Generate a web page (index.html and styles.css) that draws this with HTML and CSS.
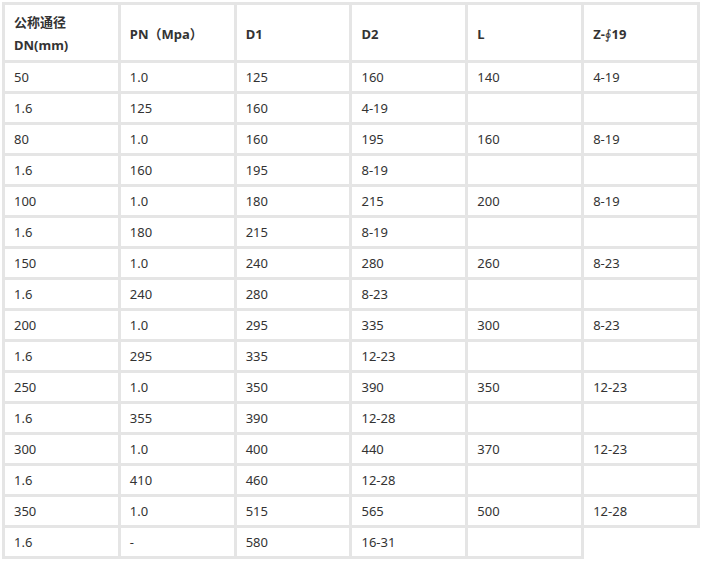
FILE: index.html
```html
<!DOCTYPE html>
<html lang="zh-CN">
<head>
<meta charset="utf-8">
<title>规格表</title>
<link rel="stylesheet" href="styles.css">
</head>
<body>
<div class="wrap">
<table class="spec">
<thead>
<tr><th class="two">公称通径<br>DN(mm)</th><th>PN（Mpa）</th><th>D1</th><th>D2</th><th>L</th><th>Z-<span class="oint">∮</span>19</th></tr>
</thead>
<tbody>
<tr><td>50</td><td>1.0</td><td>125</td><td>160</td><td>140</td><td>4-19</td></tr>
<tr><td>1.6</td><td>125</td><td>160</td><td>4-19</td><td></td><td></td></tr>
<tr><td>80</td><td>1.0</td><td>160</td><td>195</td><td>160</td><td>8-19</td></tr>
<tr><td>1.6</td><td>160</td><td>195</td><td>8-19</td><td></td><td></td></tr>
<tr><td>100</td><td>1.0</td><td>180</td><td>215</td><td>200</td><td>8-19</td></tr>
<tr><td>1.6</td><td>180</td><td>215</td><td>8-19</td><td></td><td></td></tr>
<tr><td>150</td><td>1.0</td><td>240</td><td>280</td><td>260</td><td>8-23</td></tr>
<tr><td>1.6</td><td>240</td><td>280</td><td>8-23</td><td></td><td></td></tr>
<tr><td>200</td><td>1.0</td><td>295</td><td>335</td><td>300</td><td>8-23</td></tr>
<tr><td>1.6</td><td>295</td><td>335</td><td>12-23</td><td></td><td></td></tr>
<tr><td>250</td><td>1.0</td><td>350</td><td>390</td><td>350</td><td>12-23</td></tr>
<tr><td>1.6</td><td>355</td><td>390</td><td>12-28</td><td></td><td></td></tr>
<tr><td>300</td><td>1.0</td><td>400</td><td>440</td><td>370</td><td>12-23</td></tr>
<tr><td>1.6</td><td>410</td><td>460</td><td>12-28</td><td></td><td></td></tr>
<tr><td>350</td><td>1.0</td><td>515</td><td>565</td><td>500</td><td>12-28</td></tr>
<tr><td>1.6</td><td>-</td><td>580</td><td>16-31</td><td></td></tr>
</tbody>
</table>
</div>
</body>
</html>
```
FILE: styles.css
```css
html, body {
  margin: 0;
  padding: 0;
  background: #ffffff;
}
.wrap {
  padding: 2px 0 0 2px;
}
.spec {
  border-collapse: collapse;
  table-layout: fixed;
  width: 698px;
  font-family: "Noto Sans", "Noto Sans CJK SC", sans-serif;
  font-size: 13px;
  color: #333333;
}
.spec th,
.spec td {
  border: 3px solid #e5e5e5;
  text-align: left;
  vertical-align: middle;
  padding: 5px 9px;
  line-height: 18px;
  height: 18px;
}
.spec th {
  font-weight: bold;
  padding: 6px 9px 3px;
  height: 46px;
  line-height: 23px;
}
.oint {
  font-family: "DejaVu Sans", sans-serif;
  font-weight: normal;
}
```
